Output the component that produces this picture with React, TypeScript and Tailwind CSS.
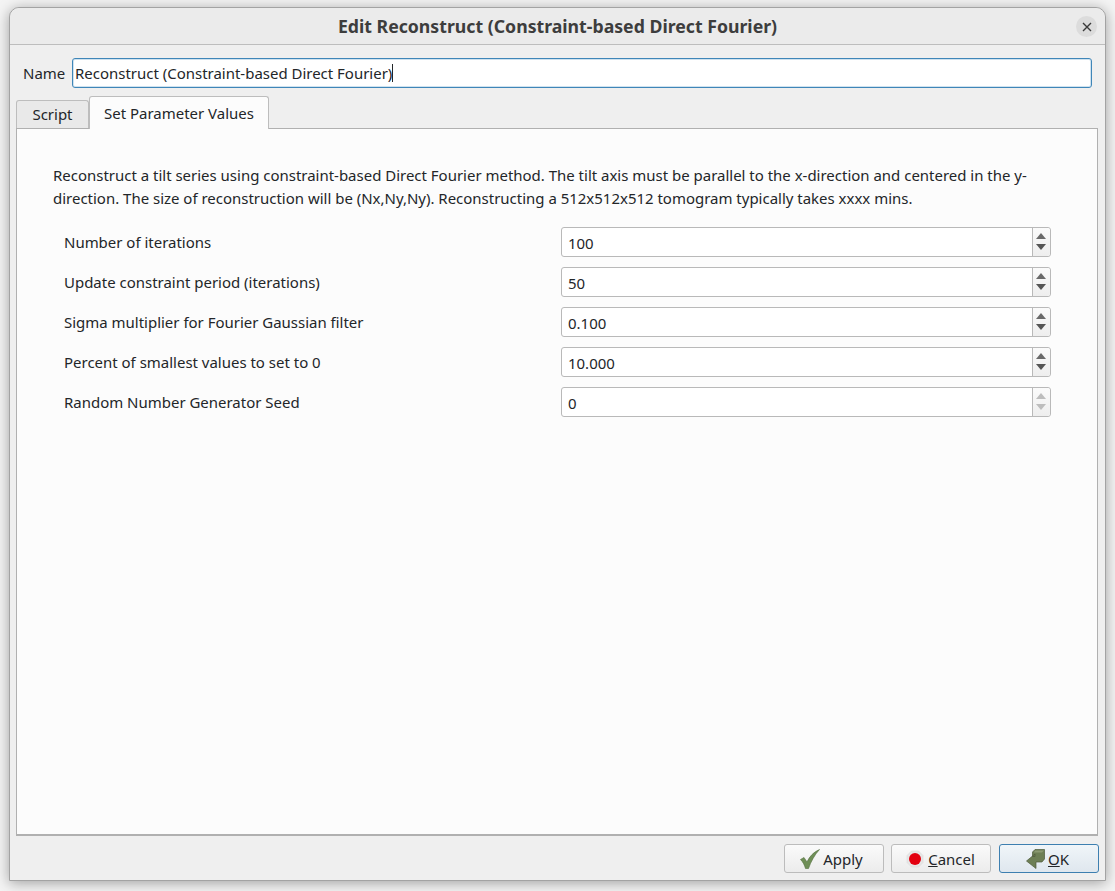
import { ReactNode } from "react";

const params = [
  { label: "Number of iterations", value: "100" },
  { label: "Update constraint period (iterations)", value: "50" },
  { label: "Sigma multiplier for Fourier Gaussian filter", value: "0.100" },
  { label: "Percent of smallest values to set to 0", value: "10.000" },
  { label: "Random Number Generator Seed", value: "0", atMin: true },
];

function SpinBox({ value, atMin }: { value: string; atMin?: boolean }) {
  return (
    <div className="flex h-[30px] w-[490px] rounded-[3px] border border-[#b9b9b9] bg-white">
      <div className="flex flex-1 items-center pl-[6px] pt-px text-[#232629]">{value}</div>
      <div className="flex w-[18px] flex-col items-center justify-center gap-[5px] rounded-r-[3px] border-l border-[#b9b9b9] bg-gradient-to-b from-[#fbfbfb] to-[#eeeeee] pb-px pr-[1px]">
        <svg width="10" height="6" viewBox="0 0 10 6">
          <path d="M5 0 L10 6 H0 Z" fill={atMin ? "#bdbdbd" : "#6a6a6a"} />
        </svg>
        <svg width="10" height="6" viewBox="0 0 10 6">
          <path d="M0 0 H10 L5 6 Z" fill={atMin ? "#bdbdbd" : "#555555"} />
        </svg>
      </div>
    </div>
  );
}

function DialogButton({ children, primary }: { children: ReactNode; primary?: boolean }) {
  return (
    <button
      className={
        "flex h-[29px] w-[100px] items-center justify-center gap-[3px] rounded-[3px] border text-[#232629] " +
        (primary
          ? "ml-px border-[#3d7fb0] bg-gradient-to-b from-[#f0f5f9] to-[#dfe7ee]"
          : "border-[#bcbcbc] bg-gradient-to-b from-[#fafafa] to-[#ececec]")
      }
    >
      {children}
    </button>
  );
}

function CheckIcon() {
  return (
    <svg width="20" height="20" viewBox="0 0 20 20">
      <path d="M0.5 10.5 L4 8.5 L7 13 C9.5 7.5 13.5 3 19.5 0.5 C14.5 6 11 12.5 8.5 19.5 L5.5 19.5 C4.5 16 3 13 0.5 10.5 Z" fill="#6f8f57" stroke="#56713f" strokeWidth="0.6" />
    </svg>
  );
}

function StopIcon() {
  return (
    <svg width="18" height="18" viewBox="0 0 18 18">
      <path d="M5.5 1 H12.5 L17 5.5 V12.5 L12.5 17 H5.5 L1 12.5 V5.5 Z" fill="#e6e6e6" stroke="#d4d4d4" strokeWidth="0.5" />
      <circle cx="9" cy="9" r="6" fill="#e3000f" />
    </svg>
  );
}

function OkIcon() {
  return (
    <svg width="19" height="20" viewBox="0 0 19 20">
      <path d="M6.5 3 L9 0.5 H18.5 V10 L16 13 H10 V19.5 L0.5 12 L9 5 V7.5 H6.5 Z" fill="#6d7f55" stroke="#4d5a3b" strokeWidth="0.7" />
      <path d="M9 1.5 H18 L16 3.5 H8 Z" fill="#8b9a73" />
    </svg>
  );
}

export default function App() {
  return (
    <div className="h-[891px] w-[1115px] overflow-hidden bg-[#f4f4f4] pl-[9px] pt-[7px] font-['Noto_Sans',sans-serif] text-[14.97px] leading-[20px] text-[#232629]">
      <div className="flex h-[874px] w-[1097px] flex-col rounded-t-[10px] border border-[#a3a3a3] bg-[#efefef] shadow-[0_2px_14px_rgba(0,0,0,0.35)]">
        <div className="relative flex h-[37px] shrink-0 items-center justify-center rounded-t-[10px] border-b border-[#bdbdbd] bg-[#ebebeb]">
          <span className="text-[17.7px] font-bold text-[#3d3d3d]">Edit Reconstruct (Constraint-based Direct Fourier)</span>
          <div className="absolute right-[8px] top-[8px] flex h-[21px] w-[21px] items-center justify-center rounded-full bg-[#dcdcdc]">
            <svg width="10" height="10" viewBox="0 0 10 10">
              <path d="M1 1 L9 9 M9 1 L1 9" stroke="#3a3a3a" strokeWidth="1.4" />
            </svg>
          </div>
        </div>

        <div className="flex flex-1 flex-col px-[6px] pt-[13px]">
          <div className="flex h-[30px] items-center">
            <span className="ml-[7px] w-[49px]">Name</span>
            <div className="flex h-[30px] w-[1020px] items-center rounded-[3px] border border-[#3f86b8] bg-white pl-[2px] shadow-[inset_0_0_0_1px_#cfe2ef]">
              <span>Reconstruct (Constraint-based Direct Fourier)</span>
              <span className="h-[18px] w-px bg-[#232629]" />
            </div>
          </div>

          <div className="mt-[7px] flex h-[33px] items-end">
            <div className="flex h-[28px] w-[73px] items-center justify-center rounded-t-[3px] border border-b-0 border-[#bdbdbd] bg-[#e9e9e9] pb-[1px]">Script</div>
            <div className="-mb-px z-10 flex h-[33px] w-[180px] items-center justify-center rounded-t-[3px] border border-b-0 border-[#bdbdbd] bg-[#fcfcfc]">Set Parameter Values</div>
          </div>

          <div className="h-[708px] w-[1082px] border border-b-2 border-[#b0b0b0] bg-[#fcfcfc] pl-[36px] pt-[35px]">
            <p className="w-[990px] leading-[23px]">
              Reconstruct a tilt series using constraint-based Direct Fourier method. The tilt axis must be parallel to the x-direction and centered in the y-direction. The size of reconstruction will be (Nx,Ny,Ny). Reconstructing a 512x512x512 tomogram typically takes xxxx mins.
            </p>
            <div className="mt-[17px] flex flex-col gap-[10px] pl-[11px]">
              {params.map((p) => (
                <div key={p.label} className="flex h-[30px] items-center">
                  <span className="w-[497px] pb-[1px]">{p.label}</span>
                  <SpinBox value={p.value} atMin={p.atMin} />
                </div>
              ))}
            </div>
          </div>

          <div className="mt-[8px] flex justify-end gap-[7px]">
            <DialogButton><CheckIcon /><span className="mr-[5px]">Apply</span></DialogButton>
            <DialogButton><StopIcon /><span className="ml-[1px] mr-[1px]"><u>C</u>ancel</span></DialogButton>
            <DialogButton primary><OkIcon /><span className="mr-[3px]"><u>O</u>K</span></DialogButton>
          </div>
        </div>
      </div>
    </div>
  );
}
